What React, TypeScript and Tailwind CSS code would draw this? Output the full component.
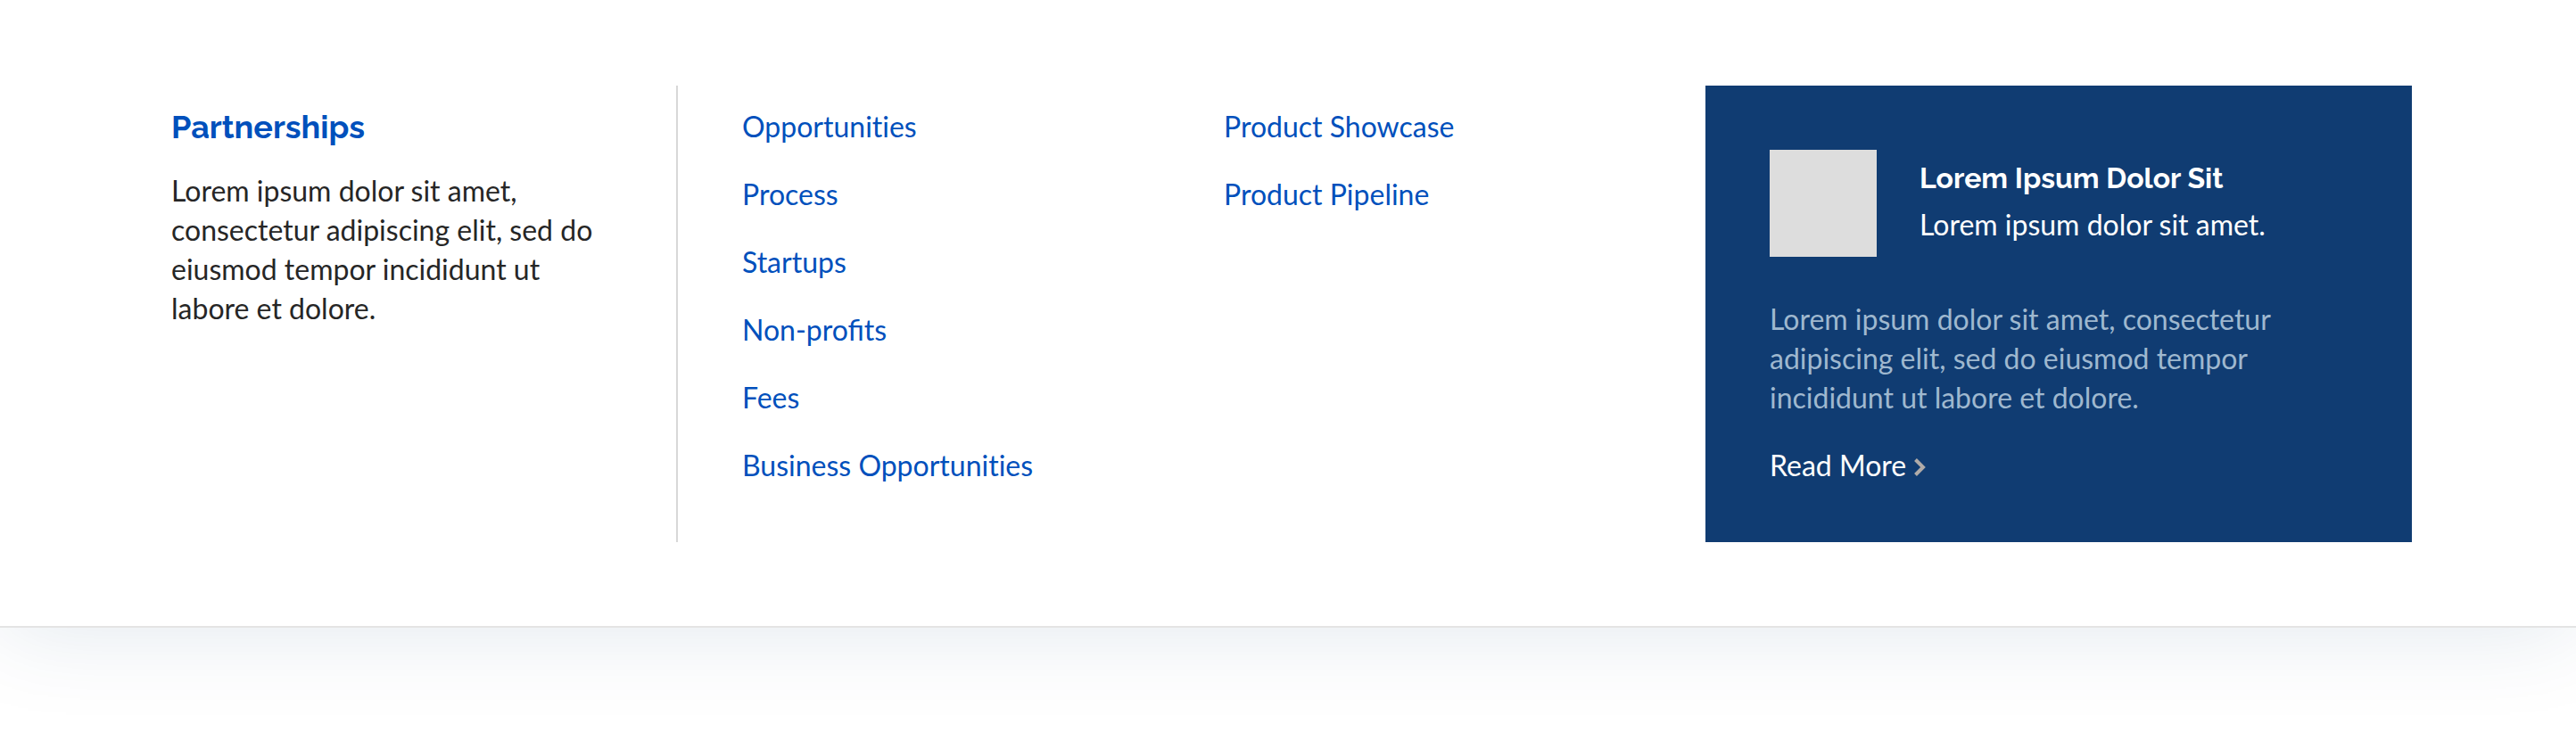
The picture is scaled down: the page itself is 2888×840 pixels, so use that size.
const primaryLinks = [
  "Opportunities",
  "Process",
  "Startups",
  "Non-profits",
  "Fees",
  "Business Opportunities",
];

const secondaryLinks = ["Product Showcase", "Product Pipeline"];

// Keep the "fi" ligature, but leave "ti" as two separate letters.
function ligatureClass(label: string) {
  return label.includes("ti") ? "[font-variant-ligatures:none]" : "";
}

function LinkColumn({ items }: { items: string[] }) {
  return (
    <ul className="flex flex-1 flex-col gap-8">
      {items.map((item) => (
        <li key={item}>
          <a href="#" className={`block text-[#0050bc] hover:underline ${ligatureClass(item)}`}>
            {item}
          </a>
        </li>
      ))}
    </ul>
  );
}

function FeatureCard() {
  return (
    <aside className="bg-[#103c72] px-[72px] pt-[72px] pb-16 text-white">
      <div className="flex items-center gap-12">
        <div className="size-[120px] shrink-0 bg-[#dddddd]" />
        <div className="flex flex-col gap-2 pb-1">
          <h3 className="font-['Raleway','Lato',sans-serif] font-bold">Lorem Ipsum Dolor Sit</h3>
          <p>Lorem ipsum dolor sit amet.</p>
        </div>
      </div>
      <p className="mt-12 text-[#9fb8cf]">
        Lorem ipsum dolor sit amet, consectetur adipiscing elit, sed do eiusmod tempor incididunt ut
        labore et dolore.
      </p>
      <a href="#" className="mt-8 flex items-center gap-2 hover:underline">
        Read More
        <svg
          className="mt-1 h-5 w-4"
          viewBox="0 0 16 20"
          fill="none"
          stroke="#b0aba8"
          strokeWidth="4"
          aria-hidden="true"
        >
          <path d="M2.5 1.5 L11 10 L2.5 18.5" />
        </svg>
      </a>
    </aside>
  );
}

export default function App() {
  return (
    <div className="overflow-hidden bg-white pb-[136px]">
      <nav
        aria-label="Partnerships"
        className="grid grid-cols-[568fr_1152fr_792fr] border-b-2 border-[#e4e4e4] bg-white pt-24 pr-46 pb-[94px] pl-48 font-['Lato',sans-serif] text-[32px] leading-[44px] text-[#262626] shadow-[0_0_100px_rgba(16,60,112,0.125)]"
      >
        <section className="border-r-2 border-[#d8d8d8] pt-6 pr-[72px]">
          <h2 className="mb-7 font-['Raleway','Lato',sans-serif] text-4xl leading-[44px] font-bold text-[#0050bc]">
            Partnerships
          </h2>
          <p>
            Lorem ipsum dolor sit amet, consectetur adipiscing elit, sed do eiusmod tempor incididunt
            ut labore et dolore.
          </p>
        </section>
        <div className="flex pt-6 pb-16 pl-[72px]">
          <LinkColumn items={primaryLinks} />
          <LinkColumn items={secondaryLinks} />
        </div>
        <FeatureCard />
      </nav>
    </div>
  );
}
